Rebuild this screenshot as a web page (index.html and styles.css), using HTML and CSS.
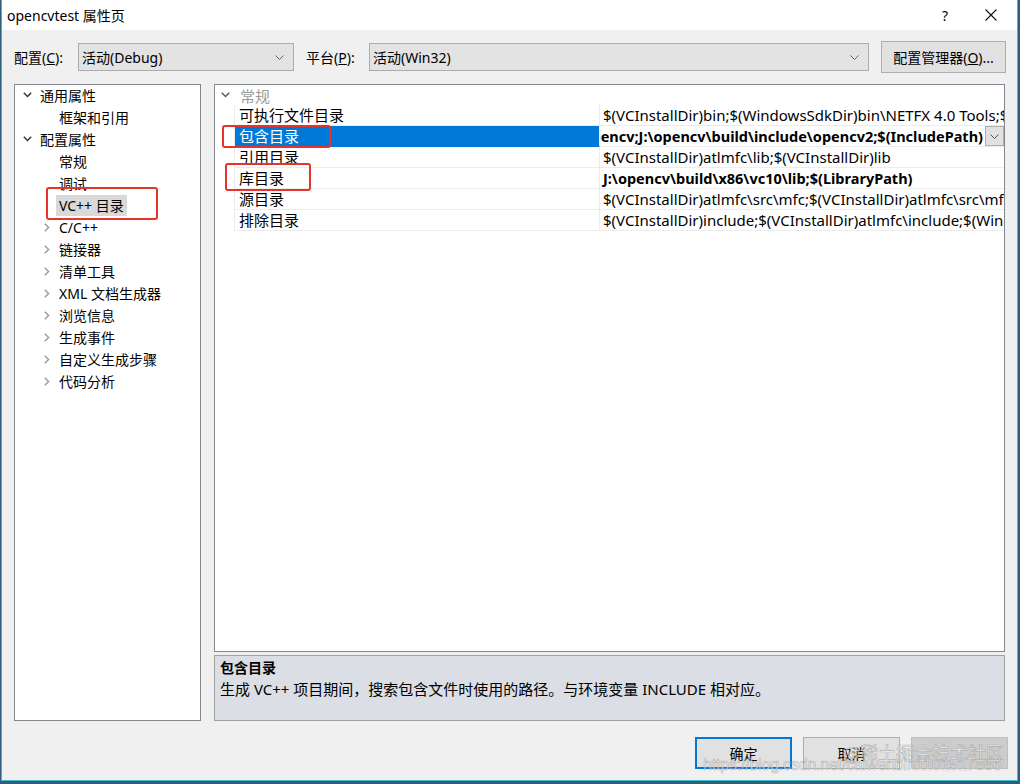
FILE: index.html
```html
<!DOCTYPE html>
<html lang="zh-CN">
<head>
<meta charset="utf-8">
<title>opencvtest 属性页</title>
<link rel="stylesheet" href="styles.css">
</head>
<body>
<div class="window">
  <div class="titlebar">
    <span class="title">opencvtest 属性页</span>
    <span class="tb-help">?</span>
    <span class="tb-close"><svg width="12" height="12" viewBox="0 0 12 12"><path d="M0.5 0.5 L11.5 11.5 M11.5 0.5 L0.5 11.5" stroke="#111" stroke-width="1.1" fill="none"/></svg></span>
  </div>

  <div class="toolbar">
    <span class="lbl lbl-cfg">配置(<u>C</u>):</span>
    <div class="combo combo-cfg"><span>活动(Debug)</span><svg class="chev" width="9" height="5" viewBox="0 0 9 5"><path d="M0.5 0.5 L4.5 4.5 L8.5 0.5" stroke="#666" fill="none"/></svg></div>
    <span class="lbl lbl-plat">平台(<u>P</u>):</span>
    <div class="combo combo-plat"><span>活动(Win32)</span><svg class="chev" width="9" height="5" viewBox="0 0 9 5"><path d="M0.5 0.5 L4.5 4.5 L8.5 0.5" stroke="#666" fill="none"/></svg></div>
    <button class="btn btn-mgr">配置管理器(<u>O</u>)...</button>
  </div>

  <div class="main">
    <div class="tree">
      <div class="trow l1"><span class="arw"><svg width="9" height="6" viewBox="0 0 9 6"><path d="M0.8 0.8 L4.5 4.6 L8.2 0.8" stroke="#333" stroke-width="1.4" fill="none"/></svg></span><span class="tl">通用属性</span></div>
      <div class="trow l2"><span class="arw"></span><span class="tl">框架和引用</span></div>
      <div class="trow l1"><span class="arw"><svg width="9" height="6" viewBox="0 0 9 6"><path d="M0.8 0.8 L4.5 4.6 L8.2 0.8" stroke="#333" stroke-width="1.4" fill="none"/></svg></span><span class="tl">配置属性</span></div>
      <div class="trow l2"><span class="arw"></span><span class="tl">常规</span></div>
      <div class="trow l2"><span class="arw"></span><span class="tl">调试</span></div>
      <div class="trow l2 sel"><span class="arw"></span><span class="tl">VC++ 目录</span><span class="mark mark-vc"></span></div>
      <div class="trow l2"><span class="arw"><svg width="6" height="9" viewBox="0 0 6 9"><path d="M0.8 0.8 L4.6 4.5 L0.8 8.2" stroke="#999" stroke-width="1.4" fill="none"/></svg></span><span class="tl">C/C++</span></div>
      <div class="trow l2"><span class="arw"><svg width="6" height="9" viewBox="0 0 6 9"><path d="M0.8 0.8 L4.6 4.5 L0.8 8.2" stroke="#999" stroke-width="1.4" fill="none"/></svg></span><span class="tl">链接器</span></div>
      <div class="trow l2"><span class="arw"><svg width="6" height="9" viewBox="0 0 6 9"><path d="M0.8 0.8 L4.6 4.5 L0.8 8.2" stroke="#999" stroke-width="1.4" fill="none"/></svg></span><span class="tl">清单工具</span></div>
      <div class="trow l2"><span class="arw"><svg width="6" height="9" viewBox="0 0 6 9"><path d="M0.8 0.8 L4.6 4.5 L0.8 8.2" stroke="#999" stroke-width="1.4" fill="none"/></svg></span><span class="tl">XML 文档生成器</span></div>
      <div class="trow l2"><span class="arw"><svg width="6" height="9" viewBox="0 0 6 9"><path d="M0.8 0.8 L4.6 4.5 L0.8 8.2" stroke="#999" stroke-width="1.4" fill="none"/></svg></span><span class="tl">浏览信息</span></div>
      <div class="trow l2"><span class="arw"><svg width="6" height="9" viewBox="0 0 6 9"><path d="M0.8 0.8 L4.6 4.5 L0.8 8.2" stroke="#999" stroke-width="1.4" fill="none"/></svg></span><span class="tl">生成事件</span></div>
      <div class="trow l2"><span class="arw"><svg width="6" height="9" viewBox="0 0 6 9"><path d="M0.8 0.8 L4.6 4.5 L0.8 8.2" stroke="#999" stroke-width="1.4" fill="none"/></svg></span><span class="tl">自定义生成步骤</span></div>
      <div class="trow l2"><span class="arw"><svg width="6" height="9" viewBox="0 0 6 9"><path d="M0.8 0.8 L4.6 4.5 L0.8 8.2" stroke="#999" stroke-width="1.4" fill="none"/></svg></span><span class="tl">代码分析</span></div>
    </div>

    <div class="right">
      <div class="grid">
        <div class="cat">
          <span class="cat-arw"><svg width="9" height="6" viewBox="0 0 9 6"><path d="M0.8 0.8 L4.5 4.6 L8.2 0.8" stroke="#555" stroke-width="1.4" fill="none"/></svg></span>
          <span class="cat-name">常规</span>
        </div>
        <div class="prow">
          <span class="pm"></span><span class="pn">可执行文件目录</span>
          <span class="pv"><span class="pvt">$(VCInstallDir)bin;$(WindowsSdkDir)bin\NETFX 4.0 Tools;$(WindowsSdkDir)bin;$(VSInstallDir)Common7\Tools\bin;$(VSInstallDir)Common7\tools;$(PATH);</span></span>
        </div>
        <div class="prow selrow">
          <span class="pm"></span><span class="pn">包含目录<span class="mark mark-inc"></span></span>
          <span class="pv pv-end bold"><span class="pvt">J:\opencv\build\include;J:\opencv\build\include\opencv;J:\opencv\build\include\opencv2;$(IncludePath)</span><span class="ddbtn"><svg width="9" height="5" viewBox="0 0 9 5"><path d="M0.5 0.5 L4.5 4.5 L8.5 0.5" stroke="#555" fill="none"/></svg></span></span>
        </div>
        <div class="prow">
          <span class="pm"></span><span class="pn">引用目录</span>
          <span class="pv"><span class="pvt">$(VCInstallDir)atlmfc\lib;$(VCInstallDir)lib</span></span>
        </div>
        <div class="prow">
          <span class="pm"></span><span class="pn">库目录<span class="mark mark-lib"></span></span>
          <span class="pv bold"><span class="pvt">J:\opencv\build\x86\vc10\lib;$(LibraryPath)</span></span>
        </div>
        <div class="prow">
          <span class="pm"></span><span class="pn">源目录</span>
          <span class="pv"><span class="pvt">$(VCInstallDir)atlmfc\src\mfc;$(VCInstallDir)atlmfc\src\mfcm;$(VCInstallDir)atlmfc\src\atl;$(VCInstallDir)crt\src;</span></span>
        </div>
        <div class="prow">
          <span class="pm"></span><span class="pn">排除目录</span>
          <span class="pv"><span class="pvt">$(VCInstallDir)include;$(VCInstallDir)atlmfc\include;$(WindowsSdkDir)include;$(FrameworkSDKDir)\include;</span></span>
        </div>
      </div>
      <div class="desc">
        <div class="desc-title">包含目录</div>
        <div class="desc-text">生成 VC++ 项目期间，搜索包含文件时使用的路径。与环境变量 INCLUDE 相对应。</div>
      </div>
    </div>
  </div>

  <div class="footer">
    <button class="btn fbtn default">确定</button>
    <button class="btn fbtn">取消</button>
    <button class="btn fbtn disabled"></button>
  </div>
</div>
<div class="wm wm1">@稀土掘金技术社区</div>
<div class="wm wm2">https://blog.csdn.net/caiwenbin1101517886</div>
</body>
</html>
```
FILE: styles.css
```css
* { box-sizing: border-box; }
html, body { margin: 0; height: 100%; }
body {
  background: #2f5d7c;
  font-family: "Noto Sans", "Noto Sans CJK SC", sans-serif;
  font-size: 14px;
  color: #000;
  overflow: hidden;
  position: relative;
}
.window {
  margin-left: 1px;
  width: 1017px;
  height: 781px;
  border: 1px solid #3fbcc5;
  border-top: none;
  background: #f0f0f0;
  display: flex;
  flex-direction: column;
}
.titlebar {
  height: 30px;
  background: #fff;
  display: flex;
  align-items: center;
  padding-left: 5px;
  font-size: 14px;
  flex-shrink: 0;
}
.title { flex: 1; }
.tb-help { width: 20px; margin-right: 30px; text-align: center; font-size: 14px; }
.tb-close { width: 12px; margin-right: 20px; display: flex; }
.toolbar {
  height: 54px;
  display: flex;
  align-items: center;
  padding-left: 12px;
  flex-shrink: 0;
}
.lbl { white-space: nowrap; }
.lbl-cfg { width: 64px; }
.lbl-plat { width: 63px; margin-left: 12px; }
.combo {
  height: 28px;
  background: #e3e3e3;
  border: 1px solid #acacac;
  display: flex;
  align-items: center;
  justify-content: space-between;
  padding: 0 9px 0 3px;
}
.combo-cfg { width: 216px; }
.combo-plat { width: 500px; }
.btn {
  font-family: inherit;
  font-size: 14px;
  color: #000;
  background: #e1e1e1;
  border: 1px solid #adadad;
  padding: 0;
}
.btn-mgr { width: 125px; height: 32px; margin-left: 12px; }
.main {
  height: 637px;
  display: flex;
  gap: 13px;
  padding: 0 12px 0 12px;
  flex-shrink: 0;
}
.tree {
  width: 187px;
  flex-shrink: 0;
  background: #fff;
  border: 1px solid #828790;
}
.trow {
  height: 22px;
  display: flex;
  align-items: center;
  white-space: nowrap;
  position: relative;
  top: -1px;
}
.trow.l1 { padding-left: 7px; }
.trow.l2 { padding-left: 27px; }
.arw { width: 10px; display: flex; justify-content: center; align-items: center; }
.trow.l1 .arw { margin-right: 5px; }
.trow.l2 .arw { margin-right: 4px; }
.tl { padding: 0 3px; line-height: 21px; }
.trow.sel .tl { background: #d9d9d9; }
.mark {
  position: absolute;
  border: 2px solid #e5342a;
  border-radius: 3px;
  pointer-events: none;
}
.mark-vc { left: 31px; top: -7px; width: 112px; height: 33px; }
.right {
  flex: 1;
  min-width: 0;
  display: flex;
  flex-direction: column;
  gap: 3px;
}
.grid {
  flex: 1;
  background: #fff;
  border: 1px solid #828790;
  overflow: hidden;
  font-size: 15px;
}
.cat {
  height: 20px;
  display: flex;
  align-items: center;
}
.cat-arw { width: 20px; display: flex; justify-content: center; }
.cat-name { padding-left: 5px; color: #9a9a9a; }
.prow {
  height: 21px;
  display: flex;
  align-items: stretch;
}
.pm { width: 20px; flex-shrink: 0; border-right: 1px solid #ececec; }
.pn {
  width: 365px;
  flex-shrink: 0;
  padding-left: 4px;
  padding-bottom: 1px;
  display: flex;
  align-items: center;
  border-bottom: 1px solid #ececec;
  border-right: 1px solid #ececec;
  position: relative;
  white-space: nowrap;
}
.selrow .pn { background: #0078d7; color: #fff; border-bottom-color: #0078d7; }
.pv {
  flex: 1;
  min-width: 0;
  overflow: hidden;
  display: flex;
  align-items: center;
  padding-left: 3px;
  padding-bottom: 1px;
  border-bottom: 1px solid #ececec;
  white-space: nowrap;
}
.pvt { flex-shrink: 0; }
.pv-end { justify-content: flex-end; padding-left: 0; padding-bottom: 0; }
.bold { font-weight: bold; font-size: 14.5px; }
.ddbtn {
  width: 19px;
  height: 20px;
  flex-shrink: 0;
  margin-left: 2px;
  background: #e1e1e1;
  border: 1px solid #adadad;
  display: flex;
  align-items: center;
  justify-content: center;
}
.mark-inc { left: -13px; top: -1px; width: 109px; height: 23px; }
.mark-lib { left: -10px; top: -5px; width: 86px; height: 28px; }
.desc {
  height: 66px;
  background: #dbdee4;
  border: 1px solid #a0a0a0;
  padding: 2px 5px;
  font-size: 15px;
}
.desc-title { font-weight: bold; line-height: 20px; font-size: 14px; }
.desc-text { line-height: 22px; }
.footer {
  flex: 1;
  display: flex;
  justify-content: flex-end;
  align-items: flex-start;
  gap: 11px;
  padding-top: 16px;
  padding-right: 9px;
}
.fbtn { width: 97px; height: 32px; }
.fbtn.default { border: 2px solid #0078d7; }
.fbtn.disabled { background: #cccccc; border-color: #bfbfbf; }
.wm {
  position: absolute;
  color: rgba(255, 255, 255, 0.6);
  -webkit-text-stroke: 0.7px rgba(130, 130, 130, 0.5);
  white-space: nowrap;
  pointer-events: none;
}
.wm1 { left: 843px; top: 739px; font-size: 18px; font-family: "Noto Sans CJK SC", sans-serif; }
.wm2 { left: 703px; top: 756px; font-size: 16px; letter-spacing: -0.2px; font-family: "Liberation Sans", sans-serif; }
```
